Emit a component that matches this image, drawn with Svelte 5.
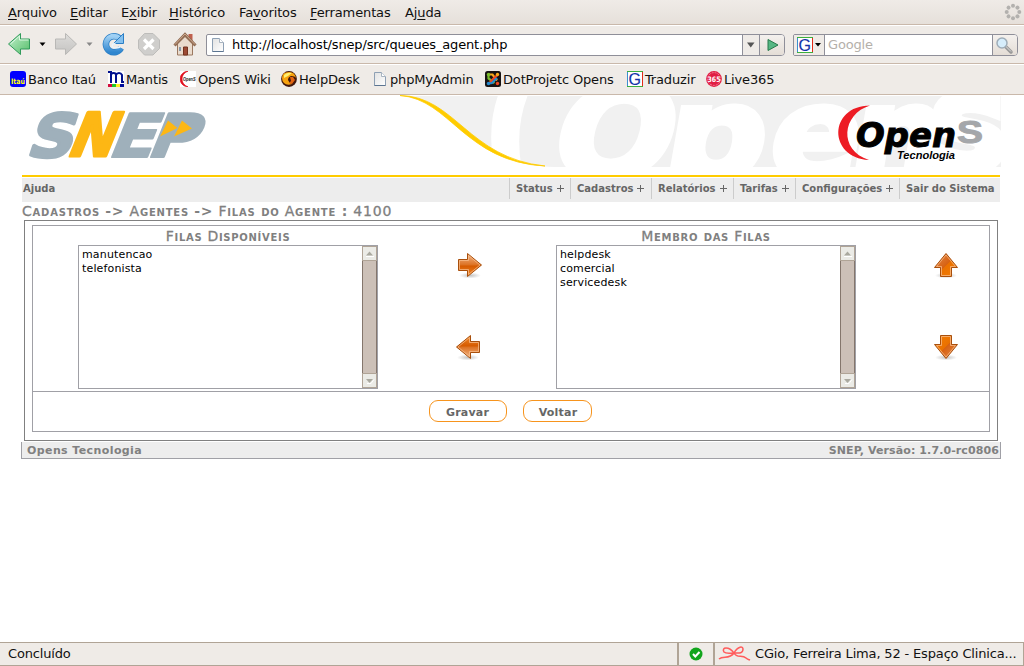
<script>
  const menus = [['', 'A', 'rquivo', 62], ['', 'E', 'ditar', 51], ['E', 'x', 'ibir', 48], ['', 'H', 'istórico', 70], ['Fa', 'v', 'oritos', 71], ['', 'F', 'erramentas', 95], ['Aj', 'u', 'da', 60]];
  const marks = [['itau', 'Banco Itaú', 98], ['mantis', 'Mantis', 72], ['wiki', 'OpenS Wiki', 101], ['help', 'HelpDesk', 91], ['page', 'phpMyAdmin', 113], ['joomla', 'DotProjetc Opens', 142], ['g', 'Traduzir', 79], ['live', 'Live365', 80]];
  const tabs = [['Status', 61], ['Cadastros', 81], ['Relatórios', 82], ['Tarifas', 62], ['Configurações', 104], ['Sair do Sistema', 101]];
  const available = ['manutencao', 'telefonista'];
  const members = ['helpdesk', 'comercial', 'servicedesk'];
  const dots = [0, 45, 90, 135, 180, 225, 270, 315];
</script>

{#snippet pageIcon()}
  <svg width="16" height="16" viewBox="0 0 16 16"><path d="M2.500 1.500h7l4 4v9h-11z" fill="url(#paper)" stroke="#8ea0b4" /><path d="M2.500 14.500h11" stroke="#5c7591" /><path d="M9.500 1.500v4h4" fill="#fff" stroke="#a9b4c0" /></svg>
{/snippet}

{#snippet gIcon()}
  <svg width="16" height="16" viewBox="0 0 16 16"><rect width="16" height="16" fill="#fff" /><path d="M.5 15.500V.5" stroke="#3b8ed0" /><path d="M0 .5h16M0 15.500h16" stroke="#3daf3d" /><path d="M15.500 1v14" stroke="#e22b18" /><text x="1.500" y="13.500" font-family="Liberation Sans" font-size="16" fill="#1433a8" stroke="#1433a8" stroke-width=".2">G</text></svg>
{/snippet}

{#snippet icon(kind)}
  {#if kind === 'page'}{@render pageIcon()}
  {:else if kind === 'g'}{@render gIcon()}
  {:else}
    <svg width="16" height="16" viewBox="0 0 16 16">
      {#if kind === 'itau'}
        <rect width="16" height="16" rx="3" fill="#00f" /><text x="1" y="12.500" textLength="14" lengthAdjust="spacingAndGlyphs" font-family="DejaVu Sans" font-weight="bold" font-size="7.500" fill="#ff0">Itaú</text>
      {:else if kind === 'mantis'}
        <rect width="16" height="16" fill="#fff" /><path d="M0 1h3v11M3 4Q3 2 5.500 2T8 4v8M8 4Q9 2 11 2t3 2v7h2" fill="none" stroke="#00108e" stroke-width="2" /><path d="M0 13h4v3H0z" fill="#d40d3e" /><path d="M4 13h4v3H4z" fill="#1fc52b" /><path d="M8 13h4v3H8z" fill="#ffed24" /><path d="M12 13h4v3h-4z" fill="#000d9b" />
      {:else if kind === 'wiki'}
        <rect width="16" height="16" fill="#fff" /><path d="M8 .2C-2.500 1-2.500 15 8 15.800 0 13 0 3 8 .2" fill="#e1101e" stroke="#e1101e" stroke-width=".7" /><text x="3" y="9.800" font-family="Liberation Sans" font-style="italic" font-weight="bold" font-size="5.500" textLength="12.500" lengthAdjust="spacingAndGlyphs" fill="#222">OpenS</text>
      {:else if kind === 'help'}
        <circle cx="8" cy="8" r="7.900" fill="#41170c" /><path d="M1 7Q1 1 8 1q6 0 7 6-1-2-5-2-3 1-3 4 1 3 4 4-5 2-8-1Q1 10 1 7" fill="#f7a20e" /><path d="M3 4q3-3 8-2L7 5 3 7z" fill="#fff06e" /><path d="M9 6h3l2 3-3 4-3-1 2-2z" fill="#e36410" />
      {:else if kind === 'joomla'}
        <rect width="16" height="16" rx="2.500" fill="#171313" /><path d="M3.500 4v3.500l6 4.500" stroke="#7bbc2d" stroke-width="2.200" fill="none" /><path d="M4 3.500h3.500l4.500 6" stroke="#f8a81c" fill="none" stroke-width="2.200" /><path d="M12.500 4L8 8l-3.500 4" stroke="#ef4525" fill="none" stroke-width="2.200" /><path d="M4 12.500l3-.5 5-5" stroke="#268bd0" stroke-width="2.200" fill="none" /><circle cx="3.500" cy="3.500" r="1.700" fill="#7bbc2d" /><circle cx="12.500" cy="3.500" r="1.700" fill="#f8a81c" /><circle cx="12.500" cy="12.500" r="1.700" fill="#ef4525" /><circle cx="3.500" cy="12.500" r="1.700" fill="#268bd0" />
      {:else}
        <circle cx="8" cy="8" r="7.900" fill="#e11d43" /><circle cx="8" cy="8" r="6.400" fill="none" stroke="#f7a3b5" stroke-width=".7" stroke-dasharray="2 1" /><text x="1.500" y="10.800" textLength="13" lengthAdjust="spacingAndGlyphs" font-family="DejaVu Sans" font-size="7.500" font-weight="bold" fill="#fff">365</text>
      {/if}
    </svg>
  {/if}
{/snippet}

{#snippet arrow(turn, id)}
  <svg class="arrow" width="26" height="28" viewBox="-13 -13 26 28">
    <ellipse cx="0" cy="10.500" rx="11" ry="3" fill="url(#shade)" />
    <g transform={`rotate(${turn})`}>
      <path d="M-11.500-5.500h9v-6L11.500 0l-14 11.500v-6h-9z" fill={`url(#${id})`} stroke="#a84f0c" />
      <path d="M-10.500-4.500h9v-5L10 0-1.500 9.500v-5h-9z" fill="none" stroke="#f8bd8c" stroke-opacity=".75" />
    </g>
  </svg>
{/snippet}

{#snippet list(items)}
  <div class="select">
    <div class="options">{#each items as item}<div>{item}</div>{/each}</div>
    <div class="scroll">
      <div class="step"><svg width="13" height="13"><path d="M3 8.500l3.500-4 3.500 4z" fill="#aaa99f" /><path d="M3 9.500h8" stroke="#fff" /></svg></div>
      <div class="thumb"></div>
      <div class="step"><svg width="13" height="13"><path d="M4 9.500h4l3-4" fill="none" stroke="#fff" /><path d="M3 5l3.500 4L10 5z" fill="#aaa99f" /></svg></div>
    </div>
  </div>
{/snippet}

<svg class="defs" width="0" height="0">
  <defs>
    <linearGradient id="paper" x2="1" y2="1"><stop stop-color="#e2e2e2" /><stop offset="1" stop-color="#fff" /></linearGradient>
    <linearGradient id="green" x2="1" y2="1"><stop stop-color="#c4f0cf" /><stop offset="1" stop-color="#55be68" /></linearGradient>
    <linearGradient id="grey" x2="0" y2="1"><stop stop-color="#dedddb" /><stop offset="1" stop-color="#c4c3c1" /></linearGradient>
    <linearGradient id="blue" x2="0" y2="1"><stop stop-color="#9fd0f4" /><stop offset="1" stop-color="#2f86cf" /></linearGradient>
    <linearGradient id="across" x2="0" y2="1"><stop stop-color="#f3b98e" /><stop offset=".48" stop-color="#dd7426" /><stop offset=".55" stop-color="#d65b00" /><stop offset="1" stop-color="#f08a2c" /></linearGradient>
    <linearGradient id="upright" x1="1" x2="0" y2="1"><stop stop-color="#e58a4b" /><stop offset=".5" stop-color="#d76213" /><stop offset=".52" stop-color="#ea7100" /><stop offset="1" stop-color="#f57e04" /></linearGradient>
    <radialGradient id="shade"><stop stop-color="#777" stop-opacity=".45" /><stop offset="1" stop-color="#777" stop-opacity="0" /></radialGradient>
  </defs>
</svg>

<div class="window">
  <div class="menubar">
    {#each menus as [a, key, b, w]}<span style:width={w + 'px'}>{a}<u>{key}</u>{b}</span>{/each}
    <svg class="throbber" width="18" height="18" viewBox="-9 -9 18 18">{#each dots as d}<circle cy="-6.300" r="2" fill="#b3b1ae" transform={`rotate(${d})`} />{/each}</svg>
  </div>

  <div class="toolbar">
    <svg width="198" height="37" viewBox="0 26 198 37">
      <path d="M8.500 44L20.500 33.500V39h9v10h-9v5.500z" fill="url(#green)" stroke="#319a5b" />
      <path d="M10.500 44l9-8V40h9" fill="none" stroke="#dbf7e2" />
      <path d="M39.500 42.500h6l-3 3.500z" fill="#000" />
      <path d="M76.500 44L65.500 33.500V39h-10v10h10v5.500z" fill="url(#grey)" stroke="#b9b8b6" />
      <path d="M86.500 42.500h6l-3 3.500z" fill="#888" />
      <path d="M119.500 38.500A8 8 0 1 0 121 48" fill="none" stroke="#2b7ec5" stroke-width="6.500" />
      <path d="M119.500 38.500A8 8 0 1 0 121 48" fill="none" stroke="url(#blue)" stroke-width="5" />
      <path d="M123.500 33.500v10h-10z" fill="#84c0ee" stroke="#2b7ec5" />
      <path d="M115.500 43.500q-4 0-3 3.500 3 2 7.500 0" fill="none" stroke="#e9f5fd" stroke-width="1.500" />
      <path d="M144.500 33.500h8.500l6.500 6.500v8.500l-6.500 6.500h-8.500l-6-6.500V40z" fill="#cfcecc" stroke="#bdbcba" />
      <path d="M144 39.500l9.500 9.500M153.500 39.500L144 49" stroke="#fff" stroke-width="3.200" />
      <path d="M190.500 34v8" stroke="#c0604e" stroke-width="4" />
      <path d="M177.500 43.500v11.500h15V43.500l-7.500-7z" fill="#eadbcd" stroke="#9b7860" />
      <path d="M174.500 45.500l10.500-11 10.500 11" fill="none" stroke="#906b52" stroke-width="3" /><path d="M175 44.500l10-10.500 10 10.500" fill="none" stroke="#cfaa90" />
      <path d="M183.500 47h4v8h-4z" fill="#9d4b35" stroke="#74331f" /><path d="M179 47h2v4h-2z" fill="#8797a6" />
    </svg>
    <div class="address">
      <div class="url">{@render pageIcon()}<span>http://localhost/snep/src/queues_agent.php</span></div>
      <div class="drop"><svg width="16" height="20"><path d="M4 7.500h7.500l-3.750 5z" fill="#555" /></svg></div>
      <div class="go"><svg width="23" height="20"><path d="M8 4.500v11l10-5.500z" fill="#56b783" stroke="#27794b" /></svg></div>
    </div>
    <div class="search">
      <div class="engine">{@render gIcon()}<svg width="8" height="6"><path d="M1 1h6L4 4.500z" /></svg></div>
      <div class="query">Google</div>
      <div class="find"><svg width="24" height="20"><path d="M12 11l6 6" stroke="#999" stroke-width="3.500" stroke-linecap="round" /><path d="M12.500 11l5.500 5.500" stroke="#ddd" /><circle cx="9" cy="8" r="5" fill="#d6edfb" stroke="#9fadb8" stroke-width="1.500" /></svg></div>
    </div>
  </div>

  <div class="bookmarks">
    {#each marks as [kind, name, w]}<div style:width={w + 'px'}>{@render icon(kind)}<span>{name}</span></div>{/each}
  </div>

  <main>
    <svg class="banner" width="1024" height="80" viewBox="0 95 1024 80">
      <defs><clipPath id="bg"><path d="M404 96C455 99 470 166 555 167H1001V96z" /></clipPath></defs>
      <g clip-path="url(#bg)">
        <path d="M400 96h601v72H400z" fill="#f1f1f1" />
        <path d="M500 90Q484 130 497 180h27Q512 130 530 90z" fill="#fff" />
        <g class="ghost">
          <text transform="translate(546 177) skewX(-14)" textLength="120" lengthAdjust="spacingAndGlyphs">O</text>
          <text transform="translate(660 177) skewX(-10)" textLength="101" lengthAdjust="spacingAndGlyphs">p</text>
          <text transform="translate(765 177) skewX(-10)" textLength="90" lengthAdjust="spacingAndGlyphs">e</text>
          <text transform="translate(846 177) skewX(-10)" textLength="92" lengthAdjust="spacingAndGlyphs">n</text>
          <text class="last" x="930" y="168" textLength="78" lengthAdjust="spacingAndGlyphs">S</text>
        </g>
      </g>
      <path d="M400 95.500C455 96 468 158 545 166 465 162 450 99 400 95.500z" fill="#fc0" stroke="#fc0" stroke-width=".8" />
      <g class="snep">
        <text class="round" transform="translate(25 157) skewX(-18)" textLength="46" lengthAdjust="spacingAndGlyphs">S</text>
        <text transform="translate(106 157) skewX(-22)" textLength="46" lengthAdjust="spacingAndGlyphs">E</text>
        <text class="gold" transform="translate(65 156) skewX(-22)" textLength="46" lengthAdjust="spacingAndGlyphs">N</text>
        <text transform="translate(145 157) skewX(-22)" textLength="49" lengthAdjust="spacingAndGlyphs">P</text>
      </g>
      <path d="M170 119h20l3 9-8 9h-22z" fill="#9fb0bb" />
      <path d="M168 120.500l9.500 7.500-17.500 8.500zM182 120.500l10 8-18 8z" fill="#fdb714" />
      <path d="M870 105.500C828 106 828 158 869 160 838 150 842 114 870 105.500z" fill="#ed1c24" />
      <text class="open" x="856" y="147" textLength="100" lengthAdjust="spacingAndGlyphs">Open</text>
      <text class="ess" x="957" y="143" textLength="26" lengthAdjust="spacingAndGlyphs">S</text>
      <text class="tec" x="897" y="159" textLength="58" lengthAdjust="spacingAndGlyphs">Tecnologia</text>
    </svg>

    <nav>
      <span class="ajuda">Ajuda</span>
      {#each tabs as [name, w], i}<span class="tab" style:width={w + 'px'}>{name}{#if i < 5}<svg width="7" height="7"><path d="M0 3.500h7M3.500 0v7" stroke="#666" /></svg>{/if}</span>{/each}
    </nav>
    <h1>C<b>adastros</b> <b>-&gt;</b> A<b>gentes</b> <b>-&gt;</b> F<b>ilas do</b> A<b>gente :</b> 4100</h1>

    <section>
      <div class="table">
        <div class="lists">
          <div class="col"><h2>F<b>ilas</b> D<b>isponíveis</b></h2>{@render list(available)}</div>
          <div class="moves">{@render arrow(0, 'across')}{@render arrow(180, 'across')}</div>
          <div class="col"><h2>M<b>embro das</b> F<b>ilas</b></h2>{@render list(members)}</div>
          <div class="moves order">{@render arrow(-90, 'upright')}{@render arrow(90, 'upright')}</div>
        </div>
        <div class="actions"><button class="save">Gravar</button><button class="back">Voltar</button></div>
      </div>
    </section>
    <footer><span class="company">Opens Tecnologia</span><span class="version">SNEP, Versão: 1.7.0-rc0806</span></footer>
  </main>

  <div class="status">
    <div class="done">Concluído</div>
    <div class="ok"><svg width="14" height="14"><circle cx="7" cy="7" r="6.500" fill="#12a51d" /><path d="M4 7l2.300 2.500L10.500 5" fill="none" stroke="#fff" stroke-width="2" /></svg></div>
    <div class="place"><svg width="34" height="18"><path d="M1 14C5 10 11 15 16 8 11 1 3 2 6 7c2 2 6 1 10 1 4-7 9-7 9-4 0 5-5 4-9 4 3 6 8 1 12 5 2 2 2 1 4 2" fill="none" stroke="#ff5c5c" stroke-width="1.500" /></svg><span>CGio, Ferreira Lima, 52 - Espaço Clinica...</span></div>
  </div>
</div>

<style>
  :global(body) { background: #fff; overflow: hidden; }
  .defs { display: block; }
  .window { width: 1024px; height: 666px; display: flex; flex-direction: column; font: 13px "DejaVu Sans", sans-serif; color: #111; white-space: nowrap; letter-spacing: -.16px; }
  .window *, .window { box-sizing: border-box; }
  svg { display: block; flex: none; letter-spacing: 0; }
  .menubar { height: 25px; display: flex; align-items: center; padding: 0 2px 0 8px; background: linear-gradient(#efebe7, #e6e0da); border-bottom: 1px solid #c9b8aa; letter-spacing: -.12px; }
  u { text-decoration-thickness: 1px; text-underline-offset: 2px; }
  .throbber { margin-left: auto; }
  .toolbar { height: 39px; display: flex; align-items: center; padding-right: 6px; background: #efebe7; border-top: 1px solid #fff; border-bottom: 1px solid #c9b8aa; }
  .address, .search { height: 22px; display: flex; border: 1px solid #8f8f99; border-radius: 2px 4px 4px 2px; background: #fff; overflow: hidden; }
  .address { width: 579px; margin-left: 8px; }
  .url { flex: 1; display: flex; align-items: center; gap: 6px; padding-left: 3px; color: #000; }
  .drop { width: 17px; border-left: 1px solid #8f8f99; background: #efebe7; }
  .go { width: 25px; border-left: 1px solid #8f8f99; background: linear-gradient(#f4f1ee, #e4ddd6); }
  .search { width: 225px; margin-left: 8px; }
  .engine { width: 31px; display: flex; align-items: center; gap: 1px; padding-left: 3px; background: #efebe7; border-right: 1px solid #8f8f99; }
  .query { flex: 1; padding: 2px 3px; color: #b4b0aa; }
  .find { width: 25px; border-left: 1px solid #8f8f99; background: linear-gradient(#f4f1ee, #e4ddd6); }
  .bookmarks { height: 31px; display: flex; align-items: center; padding: 0 0 1px 10px; background: #efebe7; border-top: 1px solid #fff; border-bottom: 1px solid #c9b8aa; }
  .bookmarks div { display: flex; align-items: center; gap: 2px; }
  main { flex: 1; background: #fff; letter-spacing: 0; }
  .ghost { fill: #fff; stroke: #fff; stroke-width: 6px; font: bold 126px "DejaVu Sans", sans-serif; }
  .last { font-size: 98px; stroke-width: 10px; }
  .snep { fill: #9fb0bb; stroke: #9fb0bb; stroke-width: 2px; stroke-linejoin: round; font: bold 60px "DejaVu Sans", sans-serif; }
  .round { stroke-width: 3px; }
  .gold { fill: #fdb714; stroke: #fdb714; stroke-width: 3px; }
  .open { font: italic bold 34px "DejaVu Sans", sans-serif; fill: #000; stroke: #000; stroke-width: 1px; }
  .ess { font: bold 31px "Liberation Sans", sans-serif; fill: #a5a7aa; stroke: #a5a7aa; stroke-width: 1px; }
  .tec { font: italic bold 11px "Liberation Sans", sans-serif; fill: #000; }
  nav { height: 27px; margin: 0 24px 0 22px; display: flex; background: #ededed; border-top: 2px solid #fc0; font-weight: bold; font-size: 10px; color: #666; box-shadow: inset 0 1px #fff; }
  .ajuda { flex: 1; padding: 6px 1px; }
  .tab { height: 21px; margin-top: 1px; padding: 5px 0 0 6px; border-left: 1px solid #ccc; display: flex; gap: 4px; }
  .tab svg { margin-top: 2px; }
  h1, h2 { margin: 0; font-variant: small-caps; color: #808080; font-weight: normal; font-size: 14px; letter-spacing: .7px; -webkit-text-stroke: .3px #808080; }
  b { -webkit-text-stroke: 0; }
  h1 { height: 18px; padding-left: 22px; line-height: 18px; letter-spacing: .78px; }
  section { width: 974px; height: 221px; margin-left: 24px; padding: 4px 7px 8px 7px; border: 1px solid #808080; }
  .table { width: 958px; height: 207px; border: 1px solid #a0a0a6; display: flex; flex-direction: column; }
  .lists { height: 166px; display: grid; grid-template-columns: 390px 88px 390px 88px; border-bottom: 1px solid #a0a0a6; }
  .col { display: flex; flex-direction: column; align-items: center; }
  h2 { height: 19px; line-height: 20px; }
  .select { width: 300px; height: 144px; display: flex; border: 1px solid #a0a0a6; }
  .options { flex: 1; padding: 2px 3px; font-size: 11px; line-height: 14px; color: #000; letter-spacing: .15px; }
  .scroll { width: 15px; display: flex; flex-direction: column; }
  .step { height: 15px; border: 1px solid #b0a496; background: #ebebe6; }
  .thumb { flex: 1; background: #ccc0b7; border: solid #84766c; border-width: 0 1px; }
  .moves { display: flex; flex-direction: column; align-items: center; gap: 54px; padding: 26px 0 0 2px; }
  .moves:not(.order) .arrow:first-child { margin-left: 3px; }
  .actions { flex: 1; display: flex; justify-content: center; gap: 16px; padding: 8px 2px 0 0; }
  button { height: 22px; padding: 2px 0 0; border: 1px solid #f7941d; border-radius: 9px; background: #fff; font: bold 11px "DejaVu Sans", sans-serif; color: #666; letter-spacing: .2px; }
  .save { width: 78px; }
  .back { width: 69px; padding-left: 2px; }
  footer { width: 980px; height: 17px; margin: 1px 0 0 21px; padding: 0 1px 0 5px; display: flex; justify-content: space-between; background: #ededed; border: 1px solid #a0a0a6; border-top: 0; font-weight: bold; font-size: 11px; line-height: 17px; color: #808080; }
  .company { letter-spacing: .4px; }
  .version { letter-spacing: .1px; }
  .status { height: 24px; display: flex; background: #efebe7; }
  .status > div { display: flex; align-items: center; border: solid #b0a496; border-width: 1px 1px 1px 0; }
  .status > .done { width: 678px; padding: 0 0 1px 8px; }
  .status > .ok { width: 36px; justify-content: center; border-left-width: 1px; }
  .status > .place { flex: 1; gap: 3px; padding: 0 0 1px 3px; border-left-width: 1px; }
</style>
